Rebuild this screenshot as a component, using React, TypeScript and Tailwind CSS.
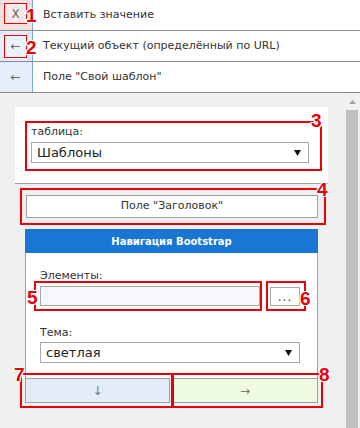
import type { ReactNode } from 'react'

const RED_BOXES = [
  { left: 4, top: 3, width: 23, height: 21, thin: true },
  { left: 4, top: 35, width: 23, height: 23, thin: true },
  { left: 25, top: 121, width: 297, height: 50 },
  { left: 20, top: 188, width: 306, height: 37 },
  { left: 34, top: 281, width: 228, height: 30 },
  { left: 266, top: 281, width: 40, height: 30 },
  { left: 20, top: 373, width: 153, height: 35 },
  { left: 172, top: 373, width: 151, height: 35 },
]

const MARKS = [
  { n: '1', left: 26, top: 6 },
  { n: '2', left: 26, top: 38 },
  { n: '3', left: 311, top: 111 },
  { n: '4', left: 317, top: 180 },
  { n: '5', left: 27, top: 288 },
  { n: '6', left: 300, top: 289 },
  { n: '7', left: 14, top: 365 },
  { n: '8', left: 319, top: 365 },
]

function Caret() {
  return (
    <svg width="7" height="6" viewBox="0 0 7 6" className="shrink-0">
      <path d="M0 0h7L3.5 6z" fill="#111" />
    </svg>
  )
}

function SelectBox({ value, width }: { value: string; width: string }) {
  return (
    <div
      className={`${width} h-[21px] border border-[#a9a9a9] bg-white flex items-center justify-between pl-[5px] pr-[7px] text-[13px] text-[#222]`}
    >
      <span>{value}</span>
      <Caret />
    </div>
  )
}

function TopRow({ icon, text, cellBg }: { icon: ReactNode; text: string; cellBg: string }) {
  return (
    <div className="flex h-[31px] border-b border-[#8c8c8c]">
      <div className={`w-[33px] shrink-0 border-r border-[#7ea6d4] ${cellBg} pl-[4px] pt-[3px]`}>{icon}</div>
      <div className="flex items-center pl-[10px] text-[11px] text-[#333]">{text}</div>
    </div>
  )
}

export default function App() {
  return (
    <div className="relative w-[360px] h-[428px] overflow-hidden bg-white font-['DejaVu_Sans',sans-serif]">
      <TopRow
        cellBg="bg-[#f5e0e0]"
        text="Вставить значение"
        icon={
          <div className="w-[23px] h-[21px] bg-[#fbeaea] flex items-center justify-center text-[12px] text-[#666]">
            X
          </div>
        }
      />
      <TopRow
        cellBg="bg-[#e5eef8]"
        text="Текущий объект (определённый по URL)"
        icon={
          <div className="w-[23px] h-[23px] bg-[#edf3fa] flex items-center justify-center text-[12px] text-[#666]">
            ←
          </div>
        }
      />
      <TopRow
        cellBg="bg-[#e5eef8]"
        text='Поле "Свой шаблон"'
        icon={<div className="w-[23px] h-[24px] flex items-center justify-center text-[12px] text-[#666]">←</div>}
      />

      <div className="flex h-[335px]">
        <div className="w-[345px] bg-[#f0f0f0] pl-[15px] pr-[17px] pt-[14px]">
          {/* table picker */}
          <div className="bg-white border-b border-[#a0a0a0] pt-[18px] pb-[20px] pl-[16px]">
            <div className="h-[13px] leading-[13px] text-[11px] text-[#333]">таблица:</div>
            <div className="mt-[4px]">
              <SelectBox value="Шаблоны" width="w-[278px]" />
            </div>
          </div>

          <div className="pl-[11px] pt-[11px]">
            <button
              type="button"
              className="w-[292px] h-[23px] border border-[#a0a0a0] bg-white text-[11px] text-[#333] flex items-center justify-center"
            >
              Поле "Заголовок"
            </button>
          </div>

          <div className="ml-[10px] mt-[11px] w-[293px]">
            <div className="h-[24px] bg-[#1976d2] text-white text-[10px] font-bold flex items-center justify-center">
              Навигация Bootstrap
            </div>
            <div className="bg-white border-x border-[#a0a0a0] pt-[16px] pb-[15px] pl-[14px]">
              <div className="h-[13px] leading-[13px] text-[11px] text-[#333]">Элементы:</div>
              <div className="mt-[4px] flex items-start gap-[10px]">
                <div className="w-[220px] h-[20px] border border-[#a9a9a9] bg-[#f7f7fe]" />
                <button
                  type="button"
                  className="mt-[1px] w-[30px] h-[19px] border border-[#a9a9a9] bg-white text-[12px] tracking-[1px] text-[#2f4f2f] flex items-center justify-center"
                >
                  ...
                </button>
              </div>
              <div className="mt-[20px] h-[13px] leading-[13px] text-[11px] text-[#333]">Тема:</div>
              <div className="mt-[3px]">
                <SelectBox value="светлая" width="w-[260px]" />
              </div>
            </div>
            <div className="flex gap-[2px]">
              <button
                type="button"
                className="w-[145px] h-[25px] border border-[#a0a0a0] bg-[#e3ecf7] text-[12px] text-[#777] flex items-center justify-center"
              >
                ↓
              </button>
              <button
                type="button"
                className="w-[146px] h-[25px] border border-[#a0a0a0] bg-[#eefae2] text-[12px] text-[#777] flex items-center justify-center"
              >
                →
              </button>
            </div>
          </div>
        </div>

        {/* scrollbar */}
        <div className="w-[15px] bg-[#f1f1f1] flex flex-col">
          <div className="h-[17px] flex items-center justify-center">
            <svg width="7" height="4" viewBox="0 0 7 4">
              <path d="M0 4L3.5 0 7 4z" fill="#a3a3a3" />
            </svg>
          </div>
          <div className="flex-1 w-[12px] ml-[1px] bg-[#c1c1c1]" />
        </div>
      </div>

      {RED_BOXES.map((b, i) => (
        <div
          key={i}
          className={`absolute pointer-events-none border-[#e8000b] ${b.thin ? 'border' : 'border-2'}`}
          style={{ left: b.left, top: b.top, width: b.width, height: b.height }}
        />
      ))}
      {MARKS.map(m => (
        <span
          key={m.n}
          className="absolute leading-none text-[19px] font-bold text-[#e8000b] font-['Liberation_Sans',sans-serif] [text-shadow:1px_1px_0_#fff,-1px_-1px_0_#fff,1px_-1px_0_#fff,-1px_1px_0_#fff,0_1px_0_#fff,0_-1px_0_#fff,1px_0_0_#fff,-1px_0_0_#fff]"
          style={{ left: m.left, top: m.top }}
        >
          {m.n}
        </span>
      ))}
    </div>
  )
}
